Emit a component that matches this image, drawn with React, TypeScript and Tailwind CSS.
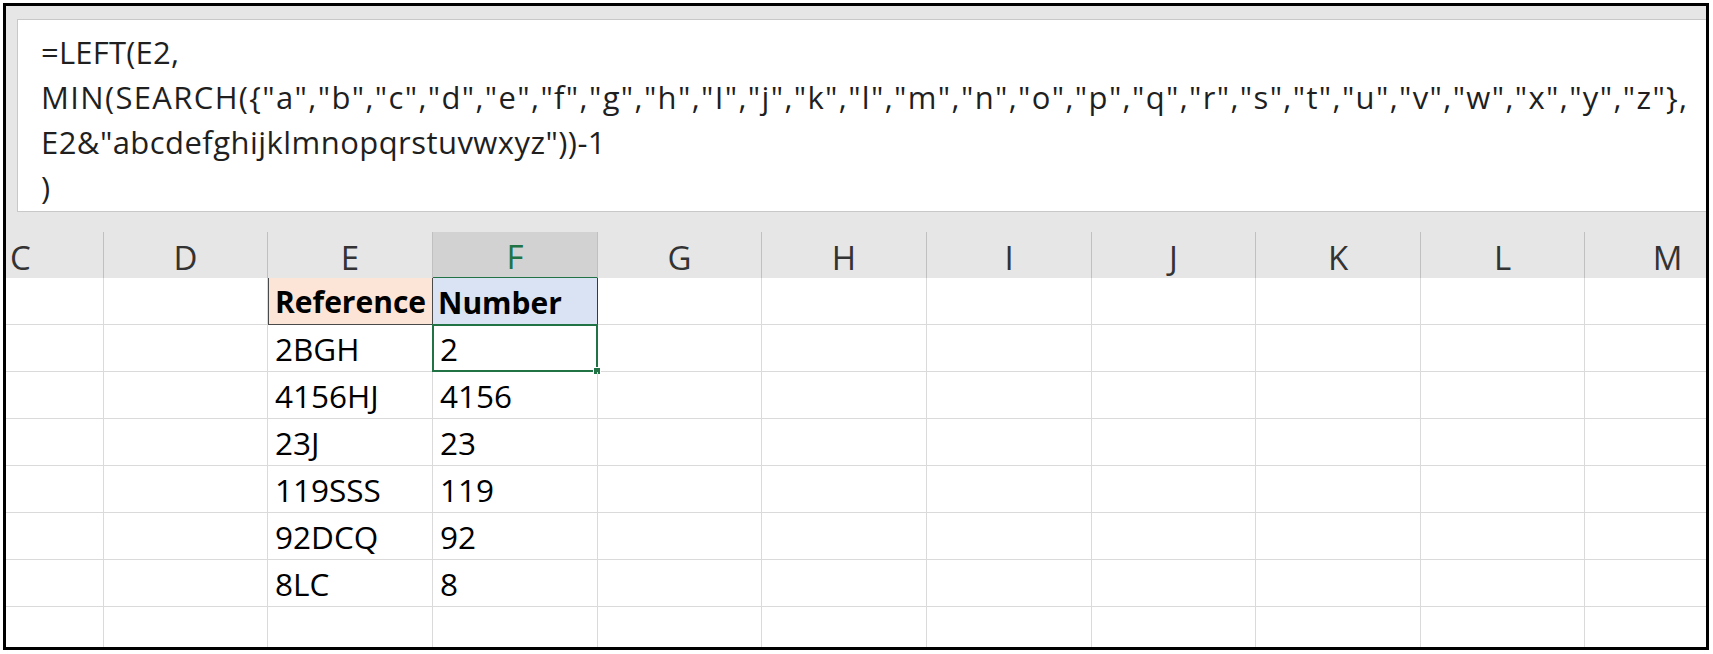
import React from "react";

const columns = ["C", "D", "E", "F", "G", "H", "I", "J", "K", "L", "M"];

const rows: [string, string][] = [
  ["Reference", "Number"],
  ["2BGH", "2"],
  ["4156HJ", "4156"],
  ["23J", "23"],
  ["119SSS", "119"],
  ["92DCQ", "92"],
  ["8LC", "8"],
  ["", ""],
  ["", ""],
];

const formula: { text: string; track: string }[] = [
  { text: "=LEFT(E2,", track: "tracking-[0.2px]" },
  {
    text: 'MIN(SEARCH({"a","b","c","d","e","f","g","h","I","j","k","l","m","n","o","p","q","r","s","t","u","v","w","x","y","z"},',
    track: "tracking-[1.35px]",
  },
  { text: 'E2&"abcdefghijklmnopqrstuvwxyz"))-1', track: "tracking-[0.45px]" },
  { text: ")", track: "tracking-normal" },
];

const gridCols =
  "grid grid-cols-[98px_164px_165px_165px_164px_165px_165px_164px_165px_164px_1fr]";

const font = { fontFamily: '"Open Sans", "Noto Sans", sans-serif' };

// header label; C and M are cut-off columns, so centre the letter on a full-width column
const HeaderCell = ({ label, index }: { label: string; index: number }) => {
  const isActive = label === "F";
  const base =
    "flex items-center overflow-hidden pt-[5px] text-[33px] leading-[40px] border-r border-b border-[#c0c0c0]";
  if (index === 0) {
    return (
      <div className={`${base} justify-end text-[#333]`}>
        <span className="w-[165px] shrink-0 text-center">{label}</span>
      </div>
    );
  }
  if (index === columns.length - 1) {
    return (
      <div className={`${base} justify-start border-r-0 text-[#333]`}>
        <span className="w-[165px] shrink-0 text-center">{label}</span>
      </div>
    );
  }
  return (
    <div
      className={
        isActive
          ? "flex items-center justify-center pt-[5px] text-[33px] leading-[40px] text-[#217346] bg-[#d2d2d2] border-r border-[#c0c0c0] border-b-2 border-b-[#217346]"
          : `${base} justify-center text-[#333]`
      }
    >
      {label}
    </div>
  );
};

const App = () => {
  return (
    <div className="w-[1713px] h-[654px] bg-white p-[3px]" style={font}>
      <div className="w-[1706px] h-[647px] border-[3px] border-black bg-[#e6e6e6] flex flex-col overflow-hidden">
        {/* formula bar */}
        <div className="h-[13px] shrink-0" />
        <div className="ml-[11px] h-[193px] shrink-0 bg-white border-l border-y border-[#c8c8c8] pl-[23px] pt-[10px] text-[31px] leading-[45px] text-[#1f1f1f]">
          {formula.map((line, i) => (
            <div key={i} className={`whitespace-nowrap ${line.track}`}>
              {line.text}
            </div>
          ))}
        </div>
        <div className="h-[20px] shrink-0" />

        {/* column headers */}
        <div className={`${gridCols} h-[46px] shrink-0`}>
          {columns.map((c, i) => (
            <HeaderCell key={c} label={c} index={i} />
          ))}
        </div>

        {/* cells */}
        <div className="flex-1 bg-white flex flex-col overflow-hidden">
          {rows.map(([ref, num], r) => (
            <div key={r} className={`${gridCols} h-[47px] shrink-0`}>
              {columns.map((c) => {
                if (c === "E") {
                  return (
                    <div
                      key={c}
                      className={
                        r === 0
                          ? "flex items-center pl-[6px] pt-[2px] text-[30px] leading-[40px] font-bold text-black bg-[#fce4d6] border-l border-r border-b border-[#4a4a4a] whitespace-nowrap"
                          : "flex items-center pl-[7px] pt-[2px] text-[31.5px] leading-[40px] text-black border-r border-b border-[#dadada]"
                      }
                    >
                      {ref}
                    </div>
                  );
                }
                if (c === "F") {
                  if (r === 0) {
                    return (
                      <div
                        key={c}
                        className="flex items-center pl-[5px] pt-[2px] text-[30px] leading-[40px] font-bold text-black bg-[#dae3f3] border-r border-[#3a3a3a]"
                      >
                        {num}
                      </div>
                    );
                  }
                  return (
                    <div
                      key={c}
                      className="relative flex items-center pl-[7px] pt-[2px] text-[31.5px] leading-[40px] text-black border-r border-b border-[#dadada]"
                    >
                      {num}
                      {r === 1 && (
                        <>
                          <div className="absolute -top-[1px] -left-[1px] -right-[1px] -bottom-[1px] border-[2.5px] border-[#217346]" />
                          <div className="absolute -right-[4px] -bottom-[4px] w-[8px] h-[8px] bg-[#217346] border border-white" />
                        </>
                      )}
                    </div>
                  );
                }
                return (
                  <div
                    key={c}
                    className="border-r border-b border-[#dadada] last:border-r-0"
                  />
                );
              })}
            </div>
          ))}
        </div>
      </div>
    </div>
  );
};

export default App;
